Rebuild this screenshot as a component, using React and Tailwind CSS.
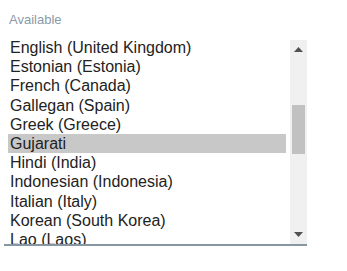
const languages = [
  'English (United Kingdom)',
  'Estonian (Estonia)',
  'French (Canada)',
  'Gallegan (Spain)',
  'Greek (Greece)',
  'Gujarati',
  'Hindi (India)',
  'Indonesian (Indonesia)',
  'Italian (Italy)',
  'Korean (South Korea)',
  'Lao (Laos)',
];

const selected = 'Gujarati';

function ScrollBar() {
  return (
    <div className="relative w-[17px] h-full bg-[#f0f0f0] shrink-0">
      <svg className="absolute left-[4px] top-[7px]" width="9" height="5" viewBox="0 0 9 5">
        <path d="M4.5 0 L9 5 L0 5 Z" fill="#505050" />
      </svg>
      <div className="absolute left-[2px] right-[2px] top-[65px] h-[49px] bg-[#c1c1c1]" />
      <svg className="absolute left-[4px] bottom-[7px]" width="9" height="5" viewBox="0 0 9 5">
        <path d="M0 0 L9 0 L4.5 5 Z" fill="#505050" />
      </svg>
    </div>
  );
}

export default function App() {
  return (
    <div className="bg-white w-[347px] h-[271px] pl-[4px] pt-[12px] font-['Liberation_Sans',Arial,sans-serif]">
      <div className="ml-[5px] text-[13px] leading-[15px] text-[#8a9aa8]">Available</div>
      <div className="mt-[13px] w-[303px] h-[206px] border-b-2 border-[#8797a2] flex">
        {/* list scrolled a little: last row is clipped by the border */}
        <div className="flex-1 overflow-hidden pl-[4px] pr-[4px]">
          <div className="-mt-[2px]">
            {languages.map((lang) => (
              <div
                key={lang}
                className={`h-[19.2px] pl-[2px] text-[16px] leading-[19.2px] whitespace-nowrap text-[#222222] ${
                  lang === selected ? 'bg-[#c8c8c8]' : ''
                }`}
              >
                {lang}
              </div>
            ))}
          </div>
        </div>
        <ScrollBar />
      </div>
    </div>
  );
}
